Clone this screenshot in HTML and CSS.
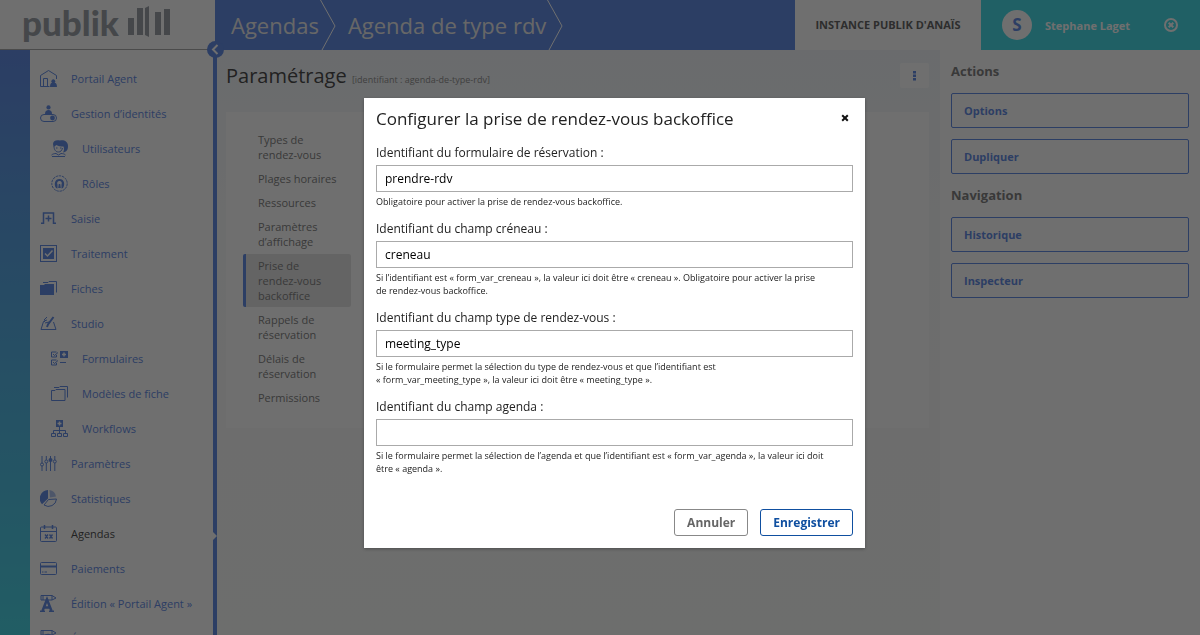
FILE: index.html
```html
<!DOCTYPE html>
<html lang="fr">
<head>
<meta charset="utf-8">
<meta name="viewport" content="width=device-width, initial-scale=1">
<title>Agenda de type rdv</title>
<link rel="stylesheet" href="styles.css">
</head>
<body>
<header class="topbar">
  <a class="logo" href="#">
    <span class="logo-text">publik</span>
    <svg class="logo-bars" viewBox="0 0 44 32" aria-hidden="true">
      <path d="M1 12h6v17H1zM10 2h6v27h-6zM18 2l4-2v31l-4-2zM28 6h6v23h-6zM37 3h6v26h-6z"/>
    </svg>
  </a>
  <nav class="breadcrumb">
    <a href="#">Agendas</a>
    <svg class="crumb-sep" viewBox="0 0 16 50"><path d="M.5 0L15 26 2 50"/></svg>
    <a href="#">Agenda de type rdv</a>
    <svg class="crumb-sep" viewBox="0 0 16 50"><path d="M.5 0L15 26 2 50"/></svg>
  </nav>
  <div class="instance">INSTANCE PUBLIK D'ANAÏS</div>
  <div class="user">
    <span class="avatar">S</span>
    <span class="user-name">Stephane Laget</span>
    <a class="logout" href="#" aria-label="Déconnexion">
      <svg viewBox="0 0 14 14"><circle cx="7" cy="7" r="6"/><path d="M4.700 4.700l4.600 4.600M9.300 4.700L4.700 9.300"/></svg>
    </a>
  </div>
</header>

<div class="page">
  <div class="strip"></div>
  <nav class="sidebar">
    <button class="collapse" type="button" aria-label="Replier le menu">
      <svg viewBox="0 0 17 17"><path d="M10.500 4L6 8.500l4.500 4.500"/></svg>
    </button>
    <ul class="menu">
      <li><a href="#"><svg viewBox="0 0 17 17"><path d="M.5 16.500V5.500L8.500.5l8 5V9M.5 16.500h9M3.500 16.500v-8h4v8"/><path class="fill" d="M10 17c0-3 1-4 2-4.200a2 2 0 1 1 2.600 0C16 13 17 14 17 17z"/></svg>Portail Agent</a></li>
      <li><a href="#"><svg viewBox="0 0 17 17"><rect x=".5" y="9.500" width="16" height="7" rx="3.500"/><circle class="fill" cx="8.500" cy="2.400" r="2.100"/><path class="fill" d="M5 9c0-3 1.500-4 3.500-4S12 6 12 9z"/><circle class="fill" cx="12.500" cy="13" r="2.400"/></svg>Gestion d’identités</a></li>
      <li class="sub"><a href="#"><svg viewBox="0 0 17 17"><path class="fill" d="M2 4C2 1 5-.5 9 .5c4-.8 8 1 8 5.500 0 4-1.500 6-5 6.500 1.500-2 1-4.500.5-6C10 6.500 7 6 5.500 5 4.500 6 3.500 6 2.500 6.500z"/><path d="M3 6c0 4 2 6 4.500 6 2 0 3.500-1.500 4-4M5 8h1.500M9 8h1.500M.5 15c1-1 3-1.500 4.500-1.500L7.500 15l2.500-1.500c2 0 3.500.5 4.500 1.500M1 16.500h13"/></svg>Utilisateurs</a></li>
      <li class="sub"><a href="#"><svg viewBox="0 0 17 17"><circle cx="8.500" cy="8.500" r="7.700" stroke-dasharray="2.400 .8"/><path class="fill" d="M5 13C2.500 9 4 4 8.500 4s6 5 3.500 9l-1.500.5V9.500c1-2-.5-3.500-2-3.500s-3 1.500-2 3.500v4z"/><path class="fill" d="M7.200 13l.6-4h1.400l.6 4z"/></svg>Rôles</a></li>
      <li><a href="#"><svg viewBox="0 0 17 17"><path stroke-width="1.500" d="M1 13.300h2.500V3h10v10.300H16M3 3h11"/><path stroke-width="1.500" d="M8.500 5.500v6M5.500 8.500h6"/></svg>Saisie</a></li>
      <li><a href="#"><svg viewBox="0 0 17 17"><rect x=".5" y=".5" width="16" height="16"/><path class="fill" d="M3 3h11v11H3z"/><path class="cut" d="M5 8.500l2.500 2.500 5-5.500"/></svg>Traitement</a></li>
      <li><a href="#"><svg viewBox="0 0 17 17"><path class="fill" d="M0 5h4l1-1h9v11H0z"/><path d="M3 2.500h5l1-1h7.500v11"/></svg>Fiches</a></li>
      <li><a href="#"><svg viewBox="0 0 17 17"><path d="M5 6.500H3.500L1 14.500h15L13.500 7M4 5l3-3M5 8l4-1M4 6l3-1"/><path stroke-width="2" d="M13.500 2L8 9.500 7 12"/></svg>Studio</a></li>
      <li class="sub"><a href="#"><svg viewBox="0 0 17 17"><path d="M5.500 2H.5v5h5V5M2 4l1.500 1.500L7 2.500M5.500 10H.5v5h5V13M2 12l1.500 1.500L7 10.500M9 12.500h6"/><path class="fill" d="M9 1h8v7H9z"/><path class="cut" d="M13 2.500v4M11 4.500h4"/></svg>Formulaires</a></li>
      <li class="sub"><a href="#"><svg viewBox="0 0 17 17"><path d="M.5 5.500H4l1-1h9v11H.5zM3 2.500h5l1-1h7.500v11"/></svg>Modèles de fiche</a></li>
      <li class="sub"><a href="#"><svg viewBox="0 0 17 17"><path class="fill" d="M5 0h7v7H5z"/><path class="cut" d="M8.500 1.500v4M6.500 3.500h4"/><path d="M8.500 7v6M2.500 13v-2.500h12V13M.5 13.500h4v3h-4zM6.500 13.500h4v3h-4zM12.500 13.500h4v3h-4z"/></svg>Workflows</a></li>
      <li><a href="#"><svg viewBox="0 0 17 17"><path d="M2 1v7M2 11v5M6.300 1v4M6.300 8v8M10.500 1v15M14.800 1v4M14.800 8v8"/><circle cx="2" cy="9.500" r="1.500"/><circle cx="6.300" cy="6.500" r="1.500"/><circle class="fill" cx="10.500" cy="5" r="2"/><circle cx="14.800" cy="6.500" r="1.500"/></svg>Paramètres</a></li>
      <li><a href="#"><svg viewBox="0 0 17 17"><path class="fill" d="M8 0v8.500l-6 5.700A8.500 8.500 0 0 1 8 0z"/><path class="soft" d="M9.500 0A8 8 0 0 1 16 6.500L10 7.500z"/><path d="M8.500 9.500l8-.5a8 8 0 0 1-12.500 6z"/></svg>Statistiques</a></li>
      <li class="active"><a href="#"><svg viewBox="0 0 17 17"><rect x=".5" y="2" width="16" height="14.500" rx="1"/><path d="M.5 6.500h16"/><path stroke-width="1.500" d="M4.500 0v4M12.500 0v4"/><path stroke-width="1.300" d="M5 9.500L8 13.500M8 9.500L5 13.500M9.500 9.500l3 4M12.500 9.500l-3 4"/></svg>Agendas</a></li>
      <li><a href="#"><svg viewBox="0 0 17 17"><rect x=".5" y="2.500" width="16" height="12" rx="1"/><path stroke-width="2" d="M.5 6.500h16"/><path d="M2 12h1.500M4.500 12H7"/></svg>Paiements</a></li>
      <li><a href="#"><svg viewBox="0 0 17 17"><path d="M1 .5h11L16 3l-4 2H1zM3 .5V5M12 .5V5"/><path stroke-width="2.500" d="M2.500 16L7 4.500 11.500 16M4 12.500h6"/><path stroke-width="1.500" d="M0 16.300h5M9 16.300h5"/></svg>Édition « Portail Agent »</a></li>
      <li><a href="#"><svg viewBox="0 0 17 17"><path d="M1 .5h11L16 3l-4 2H1zM3 .5V5M12 .5V5"/><path stroke-width="2.500" d="M12 7C8 3 3 6 3 10s5 7 9 4"/></svg>Édition « Portail Citoyen »</a></li>
    </ul>
  </nav>

  <main class="content">
    <div class="heading">
      <h2>Paramétrage <span class="identifier">[identifiant : agenda-de-type-rdv]</span></h2>
      <button class="more" type="button" aria-label="Plus d’actions">
        <svg viewBox="0 0 4 10"><path d="M0 0h3v2.500H0zM0 3.500h3V6H0zM0 7h3v2.500H0z"/></svg>
      </button>
    </div>
    <div class="section">
      <ul class="tabs">
        <li><a href="#">Types de rendez-vous</a></li>
        <li><a href="#">Plages horaires</a></li>
        <li><a href="#">Ressources</a></li>
        <li><a href="#">Paramètres d’affichage</a></li>
        <li class="selected"><a href="#">Prise de rendez-vous backoffice</a></li>
        <li><a href="#">Rappels de réservation</a></li>
        <li><a href="#">Délais de réservation</a></li>
        <li><a href="#">Permissions</a></li>
      </ul>
    </div>
  </main>

  <aside class="actions">
    <h3>Actions</h3>
    <a class="action" href="#">Options</a>
    <a class="action" href="#">Dupliquer</a>
    <h3>Navigation</h3>
    <a class="action" href="#">Historique</a>
    <a class="action" href="#">Inspecteur</a>
  </aside>
</div>

<div class="overlay">
  <form class="dialog" role="dialog" aria-labelledby="dialog-title">
    <div class="dialog-title">
      <h1 id="dialog-title">Configurer la prise de rendez-vous backoffice</h1>
      <button class="close" type="button" aria-label="Fermer">
        <svg viewBox="0 0 8 8"><path d="M1.200 1.200l5.600 5.600M6.800 1.200L1.200 6.800"/></svg>
      </button>
    </div>
    <div class="widget">
      <label for="form-slug">Identifiant du formulaire de réservation :</label>
      <input id="form-slug" type="text" value="prendre-rdv">
      <p class="hint">Obligatoire pour activer la prise de rendez-vous backoffice.</p>
    </div>
    <div class="widget">
      <label for="slot-field">Identifiant du champ créneau :</label>
      <input id="slot-field" type="text" value="creneau">
      <p class="hint">Si l’identifiant est « form_var_creneau », la valeur ici doit être « creneau ». Obligatoire pour activer la prise<br>de rendez-vous backoffice.</p>
    </div>
    <div class="widget">
      <label for="type-field">Identifiant du champ type de rendez-vous :</label>
      <input id="type-field" type="text" value="meeting_type">
      <p class="hint">Si le formulaire permet la sélection du type de rendez-vous et que l’identifiant est<br>« form_var_meeting_type », la valeur ici doit être « meeting_type ».</p>
    </div>
    <div class="widget">
      <label for="agenda-field">Identifiant du champ agenda :</label>
      <input id="agenda-field" type="text" value="">
      <p class="hint">Si le formulaire permet la sélection de l’agenda et que l’identifiant est « form_var_agenda », la valeur ici doit<br>être « agenda ».</p>
    </div>
    <div class="buttons">
      <button class="btn" type="button">Annuler</button>
      <button class="btn btn-submit" type="submit">Enregistrer</button>
    </div>
  </form>
</div>
</body>
</html>
```
FILE: styles.css
```css
:root {
  --primary: #3f72de;
  --teal: #1fd4e2;
  --text: #222;
  --muted: #666;
}
* {
  box-sizing: border-box;
}
body {
  margin: 0;
  height: 100vh;
  display: flex;
  flex-direction: column;
  overflow: hidden;
  font-family: "Open Sans", "Noto Sans", sans-serif;
  font-size: 11px;
  color: var(--text);
  background: #fff;
}
a {
  color: inherit;
  text-decoration: none;
}
ul {
  list-style: none;
  margin: 0;
  padding: 0;
}
button {
  font-family: inherit;
  cursor: pointer;
}

/* top bar */
.topbar {
  display: flex;
  flex-shrink: 0;
  height: 50px;
}
.logo {
  display: flex;
  align-items: flex-start;
  gap: 8px;
  width: 215px;
  padding-left: 22px;
  border-bottom: 1px solid #999;
  color: #868e96;
}
.logo-text {
  font-family: Lato, "Open Sans", sans-serif;
  font-weight: 900;
  font-size: 35px;
  line-height: 44px;
}
.logo-bars {
  width: 44px;
  height: 32px;
  margin-top: 6px;
  fill: currentColor;
}
.breadcrumb {
  flex: 1;
  display: flex;
  align-items: center;
  padding-left: 16px;
  background: var(--primary);
  color: #e8e8e8;
  font-size: 22px;
}
.crumb-sep {
  width: 16px;
  height: 50px;
  margin: 0 12px 0 1px;
  fill: none;
  stroke: #fff;
}
.crumb-sep:last-child {
  margin-right: 0;
}
.instance {
  width: 186px;
  line-height: 50px;
  text-align: center;
  font-weight: bold;
  color: #444;
}
.user {
  display: flex;
  align-items: center;
  width: 219px;
  padding: 0 22px 0 21px;
  background: var(--teal);
  color: #fff;
  font-weight: bold;
}
.avatar {
  width: 30px;
  height: 30px;
  margin-right: 13px;
  border-radius: 50%;
  background: #fff;
  color: var(--primary);
  font-size: 17px;
  line-height: 30px;
  text-align: center;
}
.logout {
  margin-left: auto;
  height: 14px;
}
.logout svg {
  width: 14px;
  height: 14px;
  fill: none;
  stroke: #fff;
  stroke-width: 2;
}

/* columns */
.page {
  flex: 1;
  min-height: 0;
  display: flex;
}
.strip {
  width: 30px;
  background: linear-gradient(#3f72de, #30a0e0 50%, #22ccdf);
}
.sidebar {
  position: relative;
  width: 187px;
  border-right: 4px solid var(--primary);
}
.collapse {
  position: absolute;
  top: -9px;
  right: -11px;
  width: 17px;
  height: 17px;
  padding: 0;
  border: none;
  border-radius: 50%;
  background: var(--primary);
}
.collapse svg {
  display: block;
  fill: none;
  stroke: #fff;
  stroke-width: 2;
}
.menu {
  height: 100%;
  padding-top: 11px;
}
.menu li {
  position: relative;
}
.menu a {
  display: flex;
  align-items: center;
  gap: 14px;
  height: 35px;
  padding-left: 10px;
  color: var(--primary);
  white-space: nowrap;
}
.menu .sub a {
  padding-left: 21px;
}
.menu .active a {
  color: var(--text);
}
.menu svg {
  width: 17px;
  height: 17px;
  fill: none;
  stroke: var(--primary);
}
.menu .fill {
  fill: var(--primary);
  stroke: none;
}
.menu .soft {
  fill: var(--primary);
  stroke: none;
  opacity: 0.5;
}
.menu .cut {
  stroke: #fff;
  stroke-width: 1.5;
}
.menu .active::after {
  content: "";
  position: absolute;
  top: 16px;
  right: -4px;
  border: 4px solid transparent;
  border-left-color: #fff;
  border-right: none;
}
.content {
  flex: 1;
  padding: 10px 11px 0 9px;
  background: linear-gradient(#f0f4f8, #f7f9f9 200px, #fafbfa);
}
.heading {
  display: flex;
  justify-content: space-between;
  align-items: flex-start;
}
h2 {
  margin: 0;
  font-size: 20px;
  font-weight: normal;
  line-height: 32px;
}
.identifier {
  font-size: 9px;
  color: #777;
}
.more {
  width: 29px;
  height: 25px;
  margin-top: 3px;
  padding: 0;
  border: none;
  border-radius: 2px;
  background: #fff;
}
.more svg {
  width: 4px;
  height: 10px;
  fill: var(--primary);
}
.section {
  margin-top: 16px;
  padding: 16px 17px 18px;
  background: #fff;
}
.tabs {
  width: 108px;
  color: var(--muted);
}
.tabs li {
  margin-bottom: 1px;
  padding: 4px 12px;
  border-left: 3px solid transparent;
  border-radius: 2px;
  line-height: 15px;
}
.tabs .selected {
  border-left-color: var(--primary);
  background: #e0e0e0;
}
.actions {
  width: 260px;
  padding: 11px;
}
h3 {
  margin: 0 0 11px;
  font-size: 13px;
  line-height: 21px;
  color: var(--muted);
}
.action {
  display: block;
  margin-bottom: 11px;
  padding: 0 12px;
  border: 1px solid var(--primary);
  border-radius: 2px;
  color: var(--primary);
  font-weight: bold;
  line-height: 33px;
}

/* dialog */
.overlay {
  position: fixed;
  inset: 0;
  display: flex;
  justify-content: center;
  align-items: flex-start;
  padding: 98px 0 0 29px;
  background: rgba(34, 34, 34, 0.65);
}
.dialog {
  width: 501px;
  padding: 0 12px 12px;
  background: #fff;
  box-shadow: 0 1px 3px rgba(0, 0, 0, 0.3);
}
.dialog-title {
  display: flex;
  justify-content: space-between;
  align-items: center;
  height: 40px;
  margin-bottom: 6px;
}
h1 {
  margin: 0;
  font-size: 17px;
  font-weight: normal;
}
.close {
  width: 16px;
  height: 16px;
  padding: 4px;
  border: none;
  background: none;
}
.close svg {
  display: block;
  width: 8px;
  height: 8px;
  stroke: #111;
  stroke-width: 2;
}
.widget {
  margin-bottom: 12px;
  font-size: 12px;
}
.widget label {
  display: block;
  margin-bottom: 3px;
  line-height: 18px;
}
.widget input {
  display: block;
  width: 100%;
  height: 27px;
  padding: 0 8px;
  border: 1px solid #aaa;
  font-family: inherit;
  font-size: 12px;
  color: #000;
}
.hint {
  margin: 3px 0 0;
  font-size: 9px;
  line-height: 13px;
}
.buttons {
  display: flex;
  justify-content: flex-end;
  gap: 12px;
  margin-top: 34px;
}
.btn {
  height: 27px;
  padding: 0 12px;
  border: 1px solid #888;
  border-radius: 3px;
  background: #fff;
  color: #666;
  font-size: 12px;
  font-weight: bold;
}
.btn-submit {
  border-color: #0f4fa0;
  color: #0f4fa0;
}
```
